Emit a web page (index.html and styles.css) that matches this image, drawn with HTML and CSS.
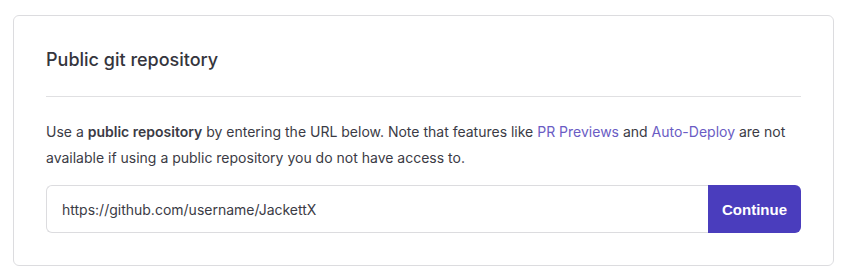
FILE: index.html
```html
<!DOCTYPE html>
<html lang="en">
<head>
    <meta charset="UTF-8">
    <meta name="viewport" content="width=device-width, initial-scale=1.0">
    <title>Public git repository</title>
    <link rel="stylesheet" href="styles.css">
</head>
<body>
    <div class="card">
        <h2 class="card-title">Public git repository</h2>
        <hr class="divider">
        <p class="note">
            Use a <strong>public repository</strong> by entering the URL below. Note that features like
            <a href="#">PR Previews</a> and <a href="#">Auto-Deploy</a> are not available if using a
            public repository you do not have access to.
        </p>
        <form class="repo-form">
            <input type="text" class="repo-input" value="https://github.com/username/JackettX">
            <button type="submit" class="continue">Continue</button>
        </form>
    </div>
</body>
</html>
```

FILE: styles.css
```css
body {
    background-color: #ffffff;
    font-family: Inter, "Noto Sans", sans-serif;
    color: #3b3b45;
    margin: 15px 8px 0 13px;
}
.card {
    border: 1px solid #dcdcdf;
    border-radius: 6px;
    padding: 32px 32px 31px 32px;
    height: 186px;
}
.card-title {
    margin: 0;
    font-size: 18px;
    font-weight: 500;
    line-height: 24px;
    color: #35353d;
}
.divider {
    border: none;
    border-top: 1px solid #e0e0e2;
    margin: 24px 0 22px 0;
}
.note {
    margin: 0;
    font-size: 14px;
    line-height: 26px;
}
.note strong {
    font-weight: 600;
}
.note a {
    color: #6a5cc4;
    text-decoration: none;
}
.repo-form {
    display: flex;
    margin-top: 14px;
}
.repo-input {
    flex: 1;
    height: 48px;
    box-sizing: border-box;
    border: 1px solid #dcdcdf;
    border-right: none;
    border-radius: 6px 0 0 6px;
    padding: 0 15px;
    font-family: Inter, "Noto Sans", sans-serif;
    font-size: 14px;
    color: #3b3b45;
    outline: none;
}
.continue {
    width: 93px;
    height: 48px;
    border: none;
    border-radius: 0 6px 6px 0;
    background-color: #4a3dbd;
    color: #ffffff;
    font-family: "Liberation Sans", Arial, sans-serif;
    font-weight: bold;
    font-size: 15px;
    cursor: pointer;
}
```
